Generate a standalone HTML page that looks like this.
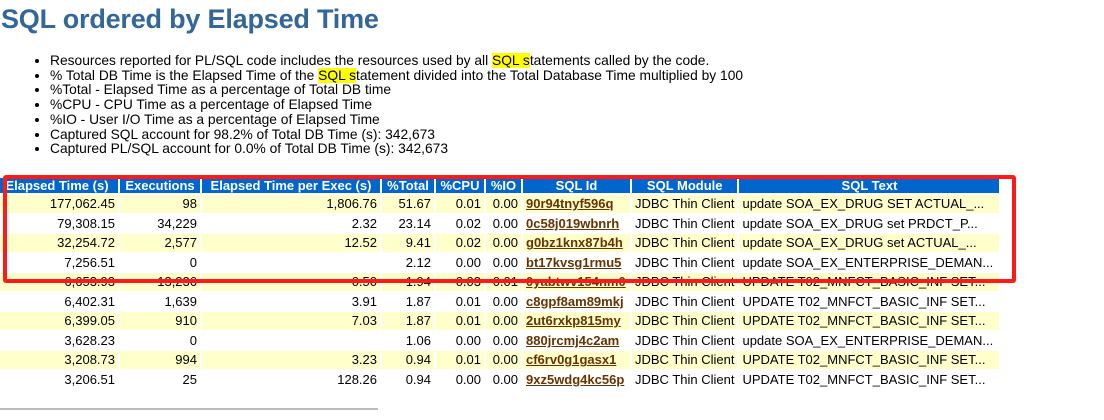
<!DOCTYPE html>
<html><head><meta charset="utf-8"><style>
body{margin:0;width:1104px;height:420px;overflow:hidden;background:#fff;font-family:"Liberation Sans",Arial,sans-serif;position:relative}
h1{position:absolute;left:1px;top:4px;margin:0;font-size:27px;font-weight:bold;color:#336699;letter-spacing:-0.2px}
ul{position:absolute;left:0;top:54px;margin:0;padding-left:50px;font-size:13.8px;line-height:14.7px;color:#000}
.hl{background:#ffff00}
table{position:absolute;left:-6px;top:176px;border-collapse:separate;border-spacing:2px;table-layout:fixed;font-size:13px}
th{background:#0066cc;color:#fff;font-weight:bold;height:15px;padding:0 3px;white-space:nowrap;overflow:hidden;font-size:13px;line-height:15px}
td{height:17.5px;padding:0 3px;white-space:nowrap;overflow:hidden;text-align:right;line-height:17px}
td.l{text-align:left}
tr.o td{background:#ffffcc}
a{color:#663300;font-weight:bold;text-decoration:underline}
.box{position:absolute;left:3px;top:175px;width:1005px;height:100px;border:4px solid #ff1a1a;border-radius:3px}
.hr{position:absolute;left:0;top:408px;width:378px;height:2px;background:#bbb}
</style></head><body>
<h1>SQL ordered by Elapsed Time</h1>
<ul>
<li>Resources reported for PL/SQL code includes the resources used by all <span class="hl">SQL s</span>tatements called by the code.</li>
<li>% Total DB Time is the Elapsed Time of the <span class="hl">SQL s</span>tatement divided into the Total Database Time multiplied by 100</li>
<li>%Total - Elapsed Time as a percentage of Total DB time</li>
<li>%CPU - CPU Time as a percentage of Elapsed Time</li>
<li>%IO - User I/O Time as a percentage of Elapsed Time</li>
<li>Captured SQL account for 98.2% of Total DB Time (s): 342,673</li>
<li>Captured PL/SQL account for 0.0% of Total DB Time (s): 342,673</li>
</ul>
<table>
<colgroup><col style="width:122px"><col style="width:80px"><col style="width:178px"><col style="width:52px"><col style="width:48px"><col style="width:35px"><col style="width:107px"><col style="width:103px"><col style="width:260px"></colgroup>
<tr><th>Elapsed Time (s)</th><th>Executions</th><th>Elapsed Time per Exec (s)</th><th>%Total</th><th>%CPU</th><th>%IO</th><th>SQL Id</th><th>SQL Module</th><th>SQL Text</th></tr>
<tr class="o"><td>177,062.45</td><td>98</td><td>1,806.76</td><td>51.67</td><td>0.01</td><td>0.00</td><td class="l"><a>90r94tnyf596q</a></td><td class="l">JDBC Thin Client</td><td class="l">update SOA_EX_DRUG SET ACTUAL_...</td></tr>
<tr><td>79,308.15</td><td>34,229</td><td>2.32</td><td>23.14</td><td>0.02</td><td>0.00</td><td class="l"><a>0c58j019wbnrh</a></td><td class="l">JDBC Thin Client</td><td class="l">update SOA_EX_DRUG set PRDCT_P...</td></tr>
<tr class="o"><td>32,254.72</td><td>2,577</td><td>12.52</td><td>9.41</td><td>0.02</td><td>0.00</td><td class="l"><a>g0bz1knx87b4h</a></td><td class="l">JDBC Thin Client</td><td class="l">update SOA_EX_DRUG set ACTUAL_...</td></tr>
<tr><td>7,256.51</td><td>0</td><td></td><td>2.12</td><td>0.00</td><td>0.00</td><td class="l"><a>bt17kvsg1rmu5</a></td><td class="l">JDBC Thin Client</td><td class="l">update SOA_EX_ENTERPRISE_DEMAN...</td></tr>
<tr class="o"><td>6,653.93</td><td>13,236</td><td>0.50</td><td>1.94</td><td>0.03</td><td>0.01</td><td class="l"><a>0yabtwv154nm0</a></td><td class="l">JDBC Thin Client</td><td class="l">UPDATE T02_MNFCT_BASIC_INF SET...</td></tr>
<tr><td>6,402.31</td><td>1,639</td><td>3.91</td><td>1.87</td><td>0.01</td><td>0.00</td><td class="l"><a>c8gpf8am89mkj</a></td><td class="l">JDBC Thin Client</td><td class="l">UPDATE T02_MNFCT_BASIC_INF SET...</td></tr>
<tr class="o"><td>6,399.05</td><td>910</td><td>7.03</td><td>1.87</td><td>0.01</td><td>0.00</td><td class="l"><a>2ut6rxkp815my</a></td><td class="l">JDBC Thin Client</td><td class="l">UPDATE T02_MNFCT_BASIC_INF SET...</td></tr>
<tr><td>3,628.23</td><td>0</td><td></td><td>1.06</td><td>0.00</td><td>0.00</td><td class="l"><a>880jrcmj4c2am</a></td><td class="l">JDBC Thin Client</td><td class="l">update SOA_EX_ENTERPRISE_DEMAN...</td></tr>
<tr class="o"><td>3,208.73</td><td>994</td><td>3.23</td><td>0.94</td><td>0.01</td><td>0.00</td><td class="l"><a>cf6rv0g1gasx1</a></td><td class="l">JDBC Thin Client</td><td class="l">UPDATE T02_MNFCT_BASIC_INF SET...</td></tr>
<tr><td>3,206.51</td><td>25</td><td>128.26</td><td>0.94</td><td>0.00</td><td>0.00</td><td class="l"><a>9xz5wdg4kc56p</a></td><td class="l">JDBC Thin Client</td><td class="l">UPDATE T02_MNFCT_BASIC_INF SET...</td></tr>
</table>
<div class="box"></div>
<div class="hr"></div>
</body></html>
